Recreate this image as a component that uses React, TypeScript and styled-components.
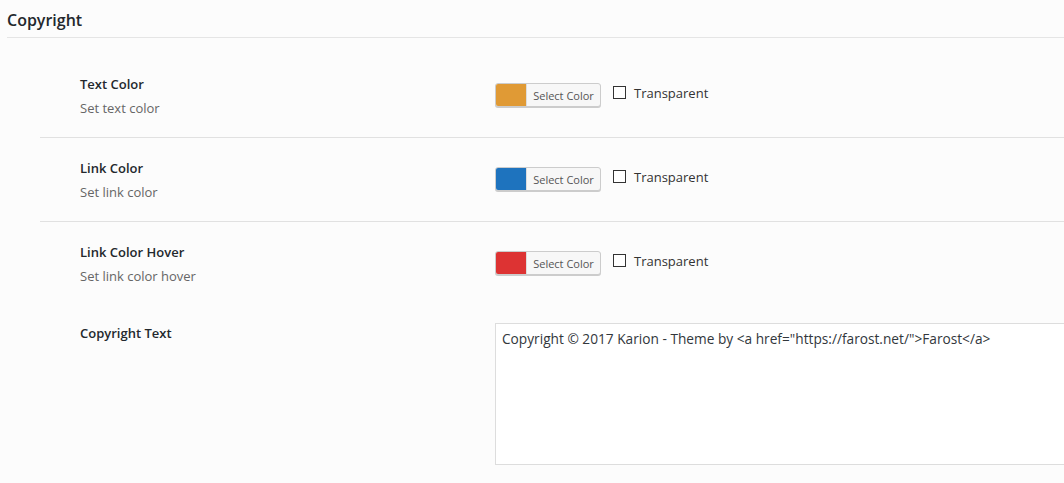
import React from "react";
import styled, { createGlobalStyle } from "styled-components";

const GlobalStyle = createGlobalStyle`
  html, body {
    margin: 0;
    padding: 0;
    background: #fcfcfc;
    font-family: "Open Sans", "Noto Sans", sans-serif;
    color: #444;
    overflow: hidden;
  }
`;

const Page = styled.div`
  width: 1064px;
  height: 483px;
  background: #fcfcfc;
  overflow: hidden;
`;

const SectionTitle = styled.h2`
  margin: 0 0 0 7px;
  padding: 9px 0 6px;
  font-size: 16px;
  line-height: 22px;
  font-weight: 600;
  color: #23282d;
  border-bottom: 1px solid #e5e5e5;
`;

const Rows = styled.div`
  padding: 16px 0 0 40px;
`;

const Row = styled.div<{ $divider?: boolean; $bottom?: number }>`
  display: flex;
  padding: 20px 0 ${(p) => p.$bottom ?? 19}px 40px;
  border-bottom: ${(p) => (p.$divider ? "1px solid #e1e1e1" : "none")};
`;

const LabelCol = styled.div`
  width: 415px;
  flex-shrink: 0;
`;

const Label = styled.div`
  font-size: 13px;
  line-height: 20px;
  font-weight: 600;
  color: #23282d;
`;

const Desc = styled.div`
  margin-top: 4px;
  font-size: 13px;
  line-height: 20px;
  color: #666;
`;

const Controls = styled.div`
  display: flex;
  align-items: center;
  gap: 12px;
  margin-top: 9px;
  height: 24px;
`;

const PickerButton = styled.button`
  display: flex;
  align-items: stretch;
  height: 24px;
  width: 106px;
  padding: 0;
  border: 1px solid #ccc;
  border-radius: 3px;
  background: #f7f7f7;
  box-shadow: 0 1px 0 #ccc;
  overflow: hidden;
  cursor: pointer;
`;

const Swatch = styled.span<{ $color: string }>`
  width: 30px;
  background: ${(p) => p.$color};
  border-right: 1px solid #ddd;
`;

const PickerText = styled.span`
  flex: 1;
  display: flex;
  align-items: center;
  justify-content: center;
  font-family: "Open Sans", sans-serif;
  font-size: 11px;
  color: #555;
`;

const CheckLabel = styled.label`
  display: flex;
  align-items: center;
  gap: 8px;
  font-size: 13px;
  color: #333;
  margin-top: -5px;
`;

const Box = styled.span`
  width: 11px;
  height: 11px;
  border: 1px solid #333;
  background: #fff;
`;

const TextArea = styled.textarea`
  width: 720px;
  height: 142px;
  flex-shrink: 0;
  box-sizing: border-box;
  padding: 5px 6px;
  border: 1px solid #ddd;
  background: #fff;
  font-family: "Open Sans", sans-serif;
  font-size: 13.7px;
  line-height: 20px;
  color: #32373c;
  resize: none;
  outline: none;
`;

const colorRows = [
  { label: "Text Color", desc: "Set text color", color: "#e09a35" },
  { label: "Link Color", desc: "Set link color", color: "#1e73be" },
  { label: "Link Color Hover", desc: "Set link color hover", color: "#dd3333" },
];

export default function App() {
  return (
    <Page>
      <GlobalStyle />
      <SectionTitle>Copyright</SectionTitle>
      <Rows>
        {colorRows.map((r, i) => {
          const last = i === colorRows.length - 1;
          return (
            <Row key={r.label} $divider={!last} $bottom={last ? 17 : 19}>
              <LabelCol>
                <Label>{r.label}</Label>
                <Desc>{r.desc}</Desc>
              </LabelCol>
              <Controls>
                <PickerButton type="button">
                  <Swatch $color={r.color} />
                  <PickerText>Select Color</PickerText>
                </PickerButton>
                <CheckLabel>
                  <Box />
                  Transparent
                </CheckLabel>
              </Controls>
            </Row>
          );
        })}
        <Row $bottom={0}>
          <LabelCol>
            <Label>Copyright Text</Label>
          </LabelCol>
          <TextArea
            readOnly
            defaultValue={
              'Copyright © 2017 Karion - Theme by <a href="https://farost.net/">Farost</a>'
            }
          />
        </Row>
      </Rows>
    </Page>
  );
}
